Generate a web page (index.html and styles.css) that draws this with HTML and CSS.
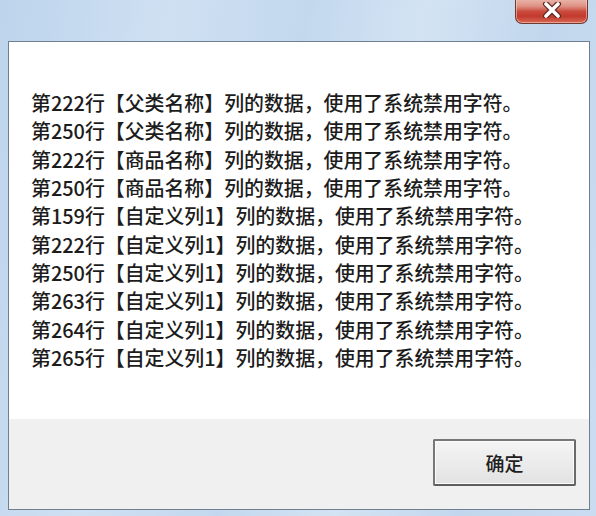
FILE: index.html
```html
<!DOCTYPE html>
<html lang="zh-CN">
<head>
<meta charset="utf-8">
<link rel="stylesheet" href="styles.css">
</head>
<body>
<div class="window">
  <div class="titlebar">
    <div class="close">
      <svg class="x" width="22" height="16" viewBox="0 0 22 16">
        <path d="M5 2 L17 14 M17 2 L5 14" stroke="#5a2a22" stroke-width="6" stroke-linecap="round"/>
        <path d="M5 2 L17 14 M17 2 L5 14" stroke="#ffffff" stroke-width="3.6" stroke-linecap="round"/>
      </svg>
    </div>
  </div>
  <div class="dialog">
    <div class="content">
      <p>第222行【父类名称】列的数据，使用了系统禁用字符。</p>
      <p>第250行【父类名称】列的数据，使用了系统禁用字符。</p>
      <p>第222行【商品名称】列的数据，使用了系统禁用字符。</p>
      <p>第250行【商品名称】列的数据，使用了系统禁用字符。</p>
      <p>第159行【自定义列1】列的数据，使用了系统禁用字符。</p>
      <p>第222行【自定义列1】列的数据，使用了系统禁用字符。</p>
      <p>第250行【自定义列1】列的数据，使用了系统禁用字符。</p>
      <p>第263行【自定义列1】列的数据，使用了系统禁用字符。</p>
      <p>第264行【自定义列1】列的数据，使用了系统禁用字符。</p>
      <p>第265行【自定义列1】列的数据，使用了系统禁用字符。</p>
    </div>
    <div class="footer">
      <button class="ok">确定</button>
    </div>
  </div>
</div>
</body>
</html>
```
FILE: styles.css
```css
html, body {
  margin: 0;
  padding: 0;
}
body {
  width: 596px;
  height: 516px;
  overflow: hidden;
  font-family: "Noto Sans CJK SC", "Noto Sans", sans-serif;
}
.window {
  width: 596px;
  height: 516px;
  background: linear-gradient(100deg, #bdd4ec 0%, #cfe0f2 25%, #c3d8ee 45%, #d3e3f3 62%, #c2d7ed 80%, #cadcf0 100%);
  display: flex;
  flex-direction: column;
}
.titlebar {
  height: 41px;
  display: flex;
  justify-content: flex-end;
  align-items: flex-start;
  padding-right: 8px;
  box-sizing: border-box;
}
.close {
  width: 73px;
  height: 25px;
  margin-top: -1px;
  box-sizing: border-box;
  border: 1px solid #6e3a32;
  border-top: none;
  border-radius: 0 0 7px 7px;
  background: linear-gradient(180deg, #eab6ac 0%, #de9284 30%, #c94a3c 52%, #c23a2d 72%, #d86a55 100%);
  box-shadow: inset 0 0 0 1px rgba(255, 220, 210, 0.5);
  display: flex;
  justify-content: center;
  align-items: center;
}
.x {
  display: block;
  margin-top: -2px;
}
.dialog {
  margin: 0 6px 0 8px;
  height: 469px;
  box-sizing: border-box;
  border: 1px solid #6f7f90;
  display: flex;
  flex-direction: column;
}
.content {
  background: #ffffff;
  height: 377px;
  box-sizing: border-box;
  padding: 47px 0 0 22px;
}
.content p {
  margin: 0;
  font-size: 19.9px;
  line-height: 28.35px;
  font-weight: 500;
  color: #1c1c1c;
  white-space: nowrap;
}
.footer {
  flex: 1;
  background: #f0f0f0;
  display: flex;
  justify-content: flex-end;
  align-items: flex-start;
  padding: 20px 13px 0 0;
}
.ok {
  width: 143px;
  height: 47px;
  box-sizing: border-box;
  border: 2px solid #777777;
  border-right-color: #6a6a6a;
  border-bottom-color: #5e5e5e;
  border-radius: 2px;
  background: linear-gradient(180deg, #f4f4f4 0%, #ececec 50%, #e2e2e2 100%);
  box-shadow: inset 0 0 0 1px #fbfbfb;
  font-family: "Noto Sans CJK SC", sans-serif;
  font-size: 19px;
  font-weight: 500;
  color: #202020;
  padding: 0;
}
```
